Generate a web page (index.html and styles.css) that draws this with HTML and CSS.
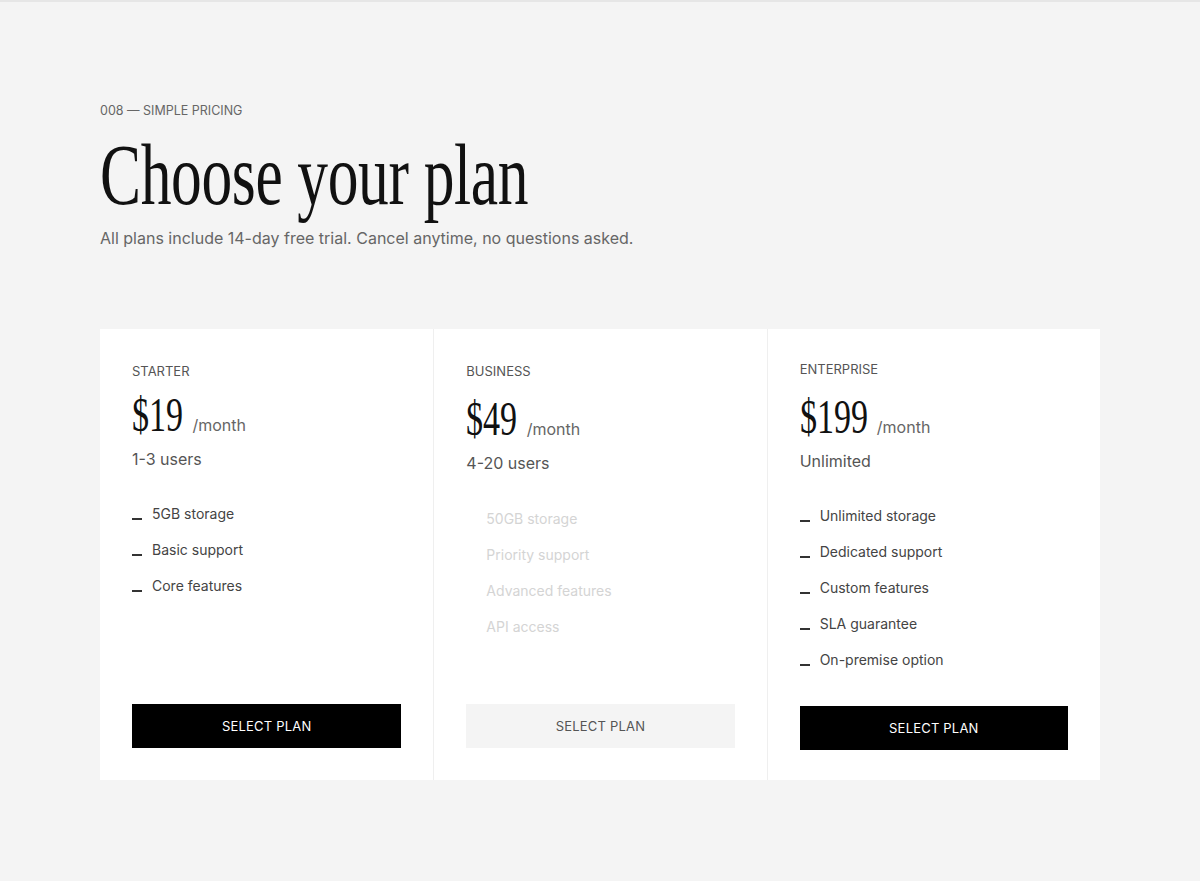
FILE: index.html
```html
<!DOCTYPE html>
<html lang="en">
<head>
<meta charset="utf-8">
<title>Choose your plan</title>
<link rel="stylesheet" href="styles.css">
</head>
<body>
<main class="page">
  <p class="eyebrow">008 — SIMPLE PRICING</p>
  <h1 class="title"><span class="title-text">Choose your plan</span></h1>
  <p class="subtitle">All plans include 14-day free trial. Cancel anytime, no questions asked.</p>

  <section class="plans">
    <article class="plan">
      <div class="plan-name">STARTER</div>
      <div class="price"><span class="amount">$19</span><span class="period">/month</span></div>
      <div class="users">1-3 users</div>
      <ul class="features">
        <li><span class="dash"></span>5GB storage</li>
        <li><span class="dash"></span>Basic support</li>
        <li><span class="dash"></span>Core features</li>
      </ul>
      <button class="btn">SELECT PLAN</button>
    </article>

    <article class="plan plan--muted">
      <div class="plan-name">BUSINESS</div>
      <div class="price"><span class="amount">$49</span><span class="period">/month</span></div>
      <div class="users">4-20 users</div>
      <ul class="features">
        <li><span class="dash"></span>50GB storage</li>
        <li><span class="dash"></span>Priority support</li>
        <li><span class="dash"></span>Advanced features</li>
        <li><span class="dash"></span>API access</li>
      </ul>
      <button class="btn btn--light">SELECT PLAN</button>
    </article>

    <article class="plan plan--raised">
      <div class="plan-name">ENTERPRISE</div>
      <div class="price"><span class="amount amount--wide">$199</span><span class="period">/month</span></div>
      <div class="users">Unlimited</div>
      <ul class="features">
        <li><span class="dash"></span>Unlimited storage</li>
        <li><span class="dash"></span>Dedicated support</li>
        <li><span class="dash"></span>Custom features</li>
        <li><span class="dash"></span>SLA guarantee</li>
        <li><span class="dash"></span>On-premise option</li>
      </ul>
      <button class="btn">SELECT PLAN</button>
    </article>
  </section>
</main>
</body>
</html>
```
FILE: styles.css
```css
* { box-sizing: border-box; }

html, body {
  margin: 0;
  padding: 0;
}

body {
  background: #f4f4f4;
  border-top: 2px solid #e6e6e6;
  font-family: Inter, "Liberation Sans", Arial, sans-serif;
  color: #111;
  min-height: 881px;
}

.page {
  width: 1000px;
  margin: 0 0 0 100px;
  padding-top: 99px;
}

.eyebrow {
  margin: 0;
  font-size: 12.5px;
  line-height: 20px;
  color: #666;
}

.title {
  margin: 11px 0 0;
  font-family: "Liberation Serif", "Times New Roman", serif;
  font-weight: 400;
  font-size: 86px;
  line-height: 86px;
  height: 86px;
  color: #111;
  white-space: nowrap;
}

.title-text {
  display: inline-block;
  transform: scaleX(0.715);
  transform-origin: left center;
  letter-spacing: -0.5px;
}

.subtitle {
  margin: 8px 0 0;
  font-size: 16px;
  line-height: 24px;
  color: #666;
}

.plans {
  margin-top: 79px;
  display: grid;
  grid-template-columns: 1fr 1fr 1fr;
  background: #fff;
}

.plan {
  display: flex;
  flex-direction: column;
  padding: 32px 32px 32px;
  border-left: 1px solid #efefef;
}

.plan:first-child { border-left: none; }

.plan-name {
  font-size: 13px;
  line-height: 20px;
  color: #555;
}

.plan--raised .plan-name { margin-top: -2px; }

.price {
  margin-top: 10px;
  display: flex;
  align-items: baseline;
  height: 48px;
}

.plan--muted .price { margin-top: 14px; }
.plan--raised .price { margin-top: 14px; }

.amount {
  display: inline-block;
  font-family: "Liberation Serif", "Times New Roman", serif;
  font-size: 48px;
  line-height: 48px;
  color: #111;
  transform: scaleX(0.71);
  transform-origin: left center;
  margin-right: -0.43em;
}

.amount--wide { margin-right: -0.58em; }

.period {
  margin-left: 9px;
  font-size: 16px;
  color: #666;
}

.users {
  margin-top: 8px;
  font-size: 16px;
  line-height: 24px;
  color: #555;
}

.features {
  list-style: none;
  margin: 33px 0 36px;
  padding: 0;
  display: flex;
  flex-direction: column;
  gap: 16px;
}

.plan--muted .features { margin-top: 34px; }

.features li {
  display: flex;
  align-items: baseline;
  font-size: 14px;
  line-height: 20px;
  color: #444;
}

.dash {
  display: inline-block;
  width: 10px;
  height: 2px;
  background: #333;
  margin-right: 10px;
  flex: none;
  align-self: flex-end;
  margin-bottom: 4px;
}

.plan--muted .features li { color: #d4d4d4; }
.plan--muted .dash { background: transparent; }

.btn {
  margin-top: auto;
  height: 44px;
  width: 100%;
  border: none;
  background: #000;
  color: #fff;
  font-family: Inter, "Liberation Sans", Arial, sans-serif;
  font-size: 13px;
  letter-spacing: 0.2px;
  cursor: pointer;
}

.btn--light {
  background: #f4f4f4;
  color: #555;
}

.plan--raised .btn { margin-bottom: -2px; }
```
